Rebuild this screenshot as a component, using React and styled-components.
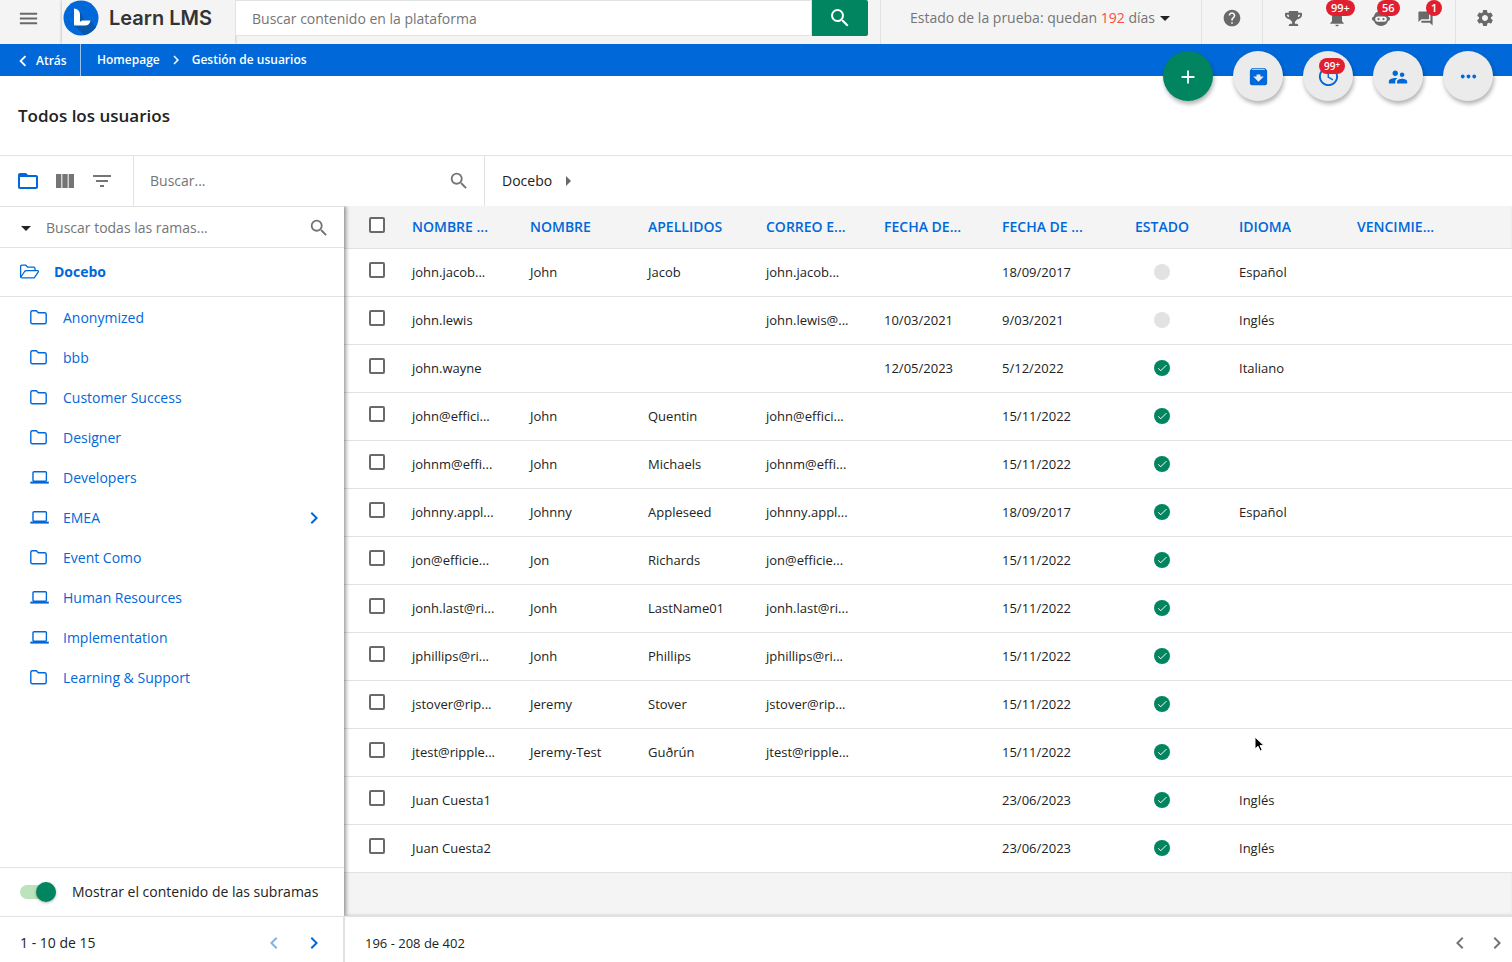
import React, { useState } from 'react';
import styled, { createGlobalStyle, css } from 'styled-components';
import {
  MdMenu, MdSearch, MdHelp, MdNotifications, MdForum, MdSettings, MdArchive, MdAccessTime,
  MdSupervisorAccount, MdMoreHoriz, MdViewColumn, MdFilterList, MdFolderOpen, MdAdd,
  MdChevronLeft, MdChevronRight, MdArrowDropDown, MdArrowRight,
} from 'react-icons/md';
import { FaTrophy } from 'react-icons/fa';

const blue = '#0068d9';
const green = '#008560';
const grey = '#696969';
const line = '#e1e2e2';
const pale = '#f4f4f4';

const GlobalStyle = createGlobalStyle`
  * {
    box-sizing: border-box;
  }

  body {
    margin: 0;
    background: #fff;
    color: #222;
    font-family: 'Open Sans', 'Noto Sans', sans-serif;
    font-size: 14px;
    line-height: 20px;
  }

  button,
  input {
    font: inherit;
    color: inherit;
    padding: 0;
    border: 0;
    background: none;
    outline: 0;
  }

  a {
    color: inherit;
    text-decoration: none;
  }

  input::placeholder {
    color: #757575;
    opacity: 1;
  }

  svg {
    display: block;
    flex: none;
  }
`;

const Page = styled.div`
  display: flex;
  flex-direction: column;
  min-height: 100vh;
`;

/* top header */

const Header = styled.header`
  display: flex;
  height: 44px;
  background: ${pale};
`;

const HeaderButton = styled.button`
  position: relative;
  display: flex;
  align-items: center;
  justify-content: center;
  width: ${props => props.$width || 44}px;
  height: 36px;
  color: ${grey};
`;

const Brand = styled.a`
  display: flex;
  align-items: center;
  gap: 10px;
  width: 173px;
  margin-left: 6px;
  padding: 0 0 8px 1px;
  background: ${pale};
  box-shadow: 0 0 3px rgba(0, 0, 0, 0.3);
  font-family: Inter, sans-serif;
  font-size: 20px;
  font-weight: 600;
  color: #333;
  white-space: nowrap;
`;

const GlobalSearch = styled.form`
  position: relative;
  display: flex;
  flex: 1;
  height: 36px;
  margin-right: 12px;

  input {
    flex: 1;
    min-width: 0;
    padding: 2px 16px 0;
    background: #fff;
    border: 1px solid ${line};
  }

  button {
    display: flex;
    align-items: center;
    justify-content: center;
    width: 56px;
    background: ${green};
    color: #fff;
    border-radius: 0 2px 2px 0;
  }
`;

const HeaderGroup = styled.div`
  display: flex;
  padding: ${props => props.$pad || '0'};
  border-left: 1px solid ${line};
`;

const Trial = styled.button`
  display: flex;
  align-items: center;
  height: 36px;
  color: #757575;

  b {
    font-weight: 400;
    color: #ff4b42;
  }

  svg {
    color: #222;
    margin-left: -2px;
  }
`;

const Badge = styled.span`
  position: absolute;
  top: ${props => (props.$fab ? 7 : 0)}px;
  left: ${props => (props.$fab ? 16 : props.$left)}px;
  height: 16px;
  padding: 0 5px;
  border-radius: 8px;
  background: #e01f2f;
  color: #fff;
  font-size: ${props => (props.$fab ? 10 : 11)}px;
  font-weight: 600;
  line-height: 16px;

  sup {
    font-size: 8px;
    line-height: 8px;
    vertical-align: 2px;
  }
`;

/* blue bar with the breadcrumbs, and the page title */

const Bar = styled.nav`
  position: relative;
  display: flex;
  align-items: center;
  height: 32px;
  background: ${blue};
  color: #fff;
  font-size: 12px;
  font-weight: 600;
`;

const Back = styled.a`
  display: flex;
  align-items: center;
  gap: 2px;
  width: 81px;
  height: 32px;
  padding: 1px 0 0 12px;
  border-right: 1px solid #99c3f0;
`;

const Crumbs = styled.div`
  display: flex;
  align-items: center;
  gap: 7px;
  padding-left: 16px;
`;

const Fabs = styled.div`
  position: absolute;
  top: 7px;
  right: 19px;
  z-index: 3;
  display: flex;
  gap: 20px;
`;

const Fab = styled.button`
  position: relative;
  display: flex;
  align-items: center;
  justify-content: center;
  width: 50px;
  height: 50px;
  padding-top: 1px;
  border-radius: 50%;
  background: ${props => (props.$main ? green : '#ebebeb')};
  color: ${props => (props.$main ? '#fff' : blue)};
  box-shadow: 1px 3px 4px rgba(0, 0, 0, 0.3);
`;

const Title = styled.h1`
  display: flex;
  align-items: center;
  height: 80px;
  margin: 0;
  padding: 1px 18px 0;
  border-bottom: 1px solid ${line};
  font-size: 17px;
  font-weight: 600;
`;

/* toolbar above the table */

const Toolbar = styled.div`
  display: flex;
  height: 50px;
`;

const Views = styled.div`
  display: flex;
  align-items: center;
  gap: 13px;
  width: 134px;
  padding-left: 16px;
  border-right: 1px solid ${line};
`;

const IconButton = styled.button`
  display: flex;
  color: ${props => (props.$active ? blue : '#757575')};
  opacity: ${props => (props.disabled ? 0.5 : 1)};
`;

const SearchBox = styled.label`
  display: flex;
  align-items: center;
  width: 351px;
  padding: 0 14px 0 16px;
  border-right: 1px solid ${line};
  color: #757575;

  input {
    flex: 1;
    min-width: 0;
  }
`;

const BranchPath = styled.div`
  display: flex;
  align-items: center;
  gap: 4px;
  padding-left: 17px;

  svg {
    color: ${grey};
  }
`;

const Main = styled.main`
  display: flex;
  flex: 1;
`;

/* branch tree */

const Sidebar = styled.aside`
  position: relative;
  z-index: 1;
  display: flex;
  flex-direction: column;
  flex: none;
  width: 344px;
  background: #fff;
  border-top: 1px solid ${line};
  box-shadow: 2px 0 4px rgba(0, 0, 0, 0.4);
  clip-path: inset(0 -10px 0 0);
`;

const BranchSearch = styled.label`
  display: flex;
  align-items: center;
  height: 41px;
  padding: 1px 14px 0;
  border-bottom: 1px solid ${line};
  color: #757575;

  input {
    flex: 1;
    min-width: 0;
    padding-left: 8px;
  }

  svg:first-child {
    color: #222;
  }
`;

const Root = styled.a`
  display: flex;
  align-items: center;
  gap: 14px;
  height: 49px;
  padding-left: 19px;
  border-bottom: 1px solid ${line};
  color: ${blue};
  font-weight: 700;
`;

const Branches = styled.ul`
  flex: 1;
  margin: 0;
  padding: 1px 0;
  list-style: none;
`;

const Branch = styled.a`
  display: flex;
  align-items: center;
  gap: 13px;
  height: 40px;
  padding: 0 18px 0 30px;
  color: ${blue};

  span {
    flex: 1;
  }
`;

const Subbranches = styled.label`
  display: flex;
  align-items: center;
  gap: 16px;
  height: 49px;
  padding-left: 20px;
  border-top: 1px solid ${line};
`;

const Toggle = styled.input`
  appearance: none;
  position: relative;
  width: 36px;
  height: 14px;
  margin: 0;
  border-radius: 7px;
  background: #bce3bb;

  &::before {
    content: '';
    position: absolute;
    top: -3px;
    left: ${props => (props.checked ? 16 : 0)}px;
    width: 20px;
    height: 20px;
    border-radius: 50%;
    background: ${props => (props.checked ? green : '#ebebeb')};
    box-shadow: 0 1px 3px rgba(0, 0, 0, 0.3);
  }
`;

/* users table */

const Users = styled.section`
  flex: 1;
  min-width: 0;
  background: ${pale};
  box-shadow: inset 0 -2px 2px #dfe0e0;
`;

const Table = styled.table`
  width: 100%;
  table-layout: fixed;
  border-collapse: collapse;
  font-size: 13px;
`;

const cell = css`
  height: 48px;
  padding: 0 12px;
  border-bottom: 1px solid ${line};
  text-align: left;
  white-space: nowrap;
  overflow: hidden;
`;

const Cell = styled.td`
  ${cell}
  background: #fff;
`;

const HeadCell = styled.th`
  ${cell}
  height: 42px;
  color: ${blue};
  font-size: 14px;
  font-weight: 600;

  &:nth-child(8) {
    padding-left: 0;
    text-align: center;
  }
`;

const StatusCell = styled(Cell)`
  padding-left: 0;

  svg {
    margin: 0 auto;
  }
`;

const Checkbox = styled.input`
  appearance: none;
  display: block;
  width: 16px;
  height: 16px;
  margin: 0 0 4px 13px;
  border: 2px solid ${grey};
  border-radius: 2px;
  background: #fff;
`;

/* pagers */

const Footer = styled.footer`
  display: flex;
  height: 46px;
  border-top: 1px solid ${line};
`;

const Pager = styled.div`
  display: flex;
  align-items: center;
  gap: ${props => (props.$wide ? 13 : 16)}px;
  flex: ${props => (props.$wide ? '1' : 'none')};
  width: ${props => (props.$wide ? 'auto' : '345px')};
  padding: 6px ${props => (props.$wide ? 3 : 17)}px 0 20px;
  border-right: ${props => (props.$wide ? 0 : 2)}px solid ${line};
  font-size: ${props => (props.$wide ? 13 : 14)}px;

  span {
    flex: 1;
  }
`;

const Pointer = styled.svg`
  position: absolute;
  top: 736px;
  left: 1253px;
  z-index: 4;
  pointer-events: none;
`;

const Logo = () => (
  <svg width="36" height="36" viewBox="0 0 36 36">
    <circle cx="18" cy="18" r="17.5" fill={blue} />
    <path d="M17 11l4 9 6.500.5 5.500 6.500a17.500 17.500 0 0 1-12 8L11 25z" fill="#0757ad" />
    <path d="M11 8.500c3.500.4 6 2.500 6 6V23l-6 2.500z" fill="#fff" />
    <path d="M11.500 25.500L19 20.500h8.500c-.4 3-2.500 5-5.500 5z" fill="#fff" />
  </svg>
);

const Robot = () => (
  <svg width="20" height="20" viewBox="0 0 20 20" fill="currentColor">
    <path fillRule="evenodd" d="M10 3c4 0 6.500 2.300 7 5.500 1.300.3 2 1.200 2 2.300s-.8 2-2 2.300C16.200 16 13.700 18 10 18s-6.200-2-7-4.900c-1.200-.3-2-1.200-2-2.300s.7-2 2-2.300C3.500 5.300 6 3 10 3zM6.800 8.500a2.600 2.600 0 0 0 0 5.200h6.400a2.600 2.600 0 0 0 0-5.200z" />
    <circle cx="7.500" cy="11.100" r="1.100" />
    <circle cx="12.500" cy="11.100" r="1.100" />
  </svg>
);

const Folder = () => (
  <svg width="20" height="18" viewBox="0 0 20 18" fill="none" stroke={blue} strokeWidth="1.400">
    <path d="M.8 3.300c0-1 .6-1.500 1.500-1.500h4l2 2h6.400c.9 0 1.500.6 1.500 1.500v7.900c0 .9-.6 1.500-1.500 1.500H2.300c-.9 0-1.500-.6-1.500-1.500z" />
  </svg>
);

const OpenFolder = () => (
  <svg width="21" height="18" viewBox="0 0 21 18" fill="none" stroke={blue} strokeWidth="1.300" strokeLinejoin="round">
    <path d="M16 7V5.500c0-.8-.5-1.300-1.300-1.300H8.800l-2-2H2.900c-.8 0-1.300.5-1.300 1.300v10c0 .8.5 1.300 1.300 1.300h12.300l4.100-6c.4-.7.100-1.200-.6-1.200H7.500c-.9 0-1.400.2-1.900.9L1.900 14" />
  </svg>
);

const Laptop = () => (
  <svg width="20" height="18" viewBox="0 0 20 18" fill="none" stroke={blue}>
    <rect x="3" y="2.700" width="13.400" height="9.600" rx="1" strokeWidth="1.400" />
    <path d="M.3 13.600h18.500" strokeWidth="2" />
  </svg>
);

const Status = ({ active }) => (
  <svg width="16" height="16" viewBox="0 0 16 16" role="img" aria-label={active ? 'Activo' : 'Inactivo'}>
    <circle cx="8" cy="8" r="8" fill={active ? green : '#e1e3e2'} />
    {active && <path d="M4.200 8.300l2.500 2.500 5.700-5.700" fill="none" stroke="#fff" strokeWidth="1" />}
  </svg>
);

const columns = ['NOMBRE ...', 'NOMBRE', 'APELLIDOS', 'CORREO E...', 'FECHA DE...', 'FECHA DE ...', 'ESTADO', 'IDIOMA', 'VENCIMIE...'];
const widths = [56, 118, 118, 118, 118, 118, 119, 118, 118];

// user, name, surname, mail, last access, created, active, language
const users = [
  ['john.jacob...', 'John', 'Jacob', 'john.jacob...', '', '18/09/2017', false, 'Español'],
  ['john.lewis', '', '', 'john.lewis@...', '10/03/2021', '9/03/2021', false, 'Inglés'],
  ['john.wayne', '', '', '', '12/05/2023', '5/12/2022', true, 'Italiano'],
  ['john@effici...', 'John', 'Quentin', 'john@effici...', '', '15/11/2022', true, ''],
  ['johnm@effi...', 'John', 'Michaels', 'johnm@effi...', '', '15/11/2022', true, ''],
  ['johnny.appl...', 'Johnny', 'Appleseed', 'johnny.appl...', '', '18/09/2017', true, 'Español'],
  ['jon@efficie...', 'Jon', 'Richards', 'jon@efficie...', '', '15/11/2022', true, ''],
  ['jonh.last@ri...', 'Jonh', 'LastName01', 'jonh.last@ri...', '', '15/11/2022', true, ''],
  ['jphillips@ri...', 'Jonh', 'Phillips', 'jphillips@ri...', '', '15/11/2022', true, ''],
  ['jstover@rip...', 'Jeremy', 'Stover', 'jstover@rip...', '', '15/11/2022', true, ''],
  ['jtest@ripple...', 'Jeremy-Test', 'Guðrún', 'jtest@ripple...', '', '15/11/2022', true, ''],
  ['Juan Cuesta1', '', '', '', '', '23/06/2023', true, 'Inglés'],
  ['Juan Cuesta2', '', '', '', '', '23/06/2023', true, 'Inglés'],
];

const branches = [
  { name: 'Anonymized' },
  { name: 'bbb' },
  { name: 'Customer Success' },
  { name: 'Designer' },
  { name: 'Developers', laptop: true },
  { name: 'EMEA', laptop: true, children: true },
  { name: 'Event Como' },
  { name: 'Human Resources', laptop: true },
  { name: 'Implementation', laptop: true },
  { name: 'Learning & Support' },
];

function TopHeader() {
  return (
    <Header>
      <HeaderButton $width={56} aria-label="Menú"><MdMenu size={23} /></HeaderButton>
      <Brand href="#home"><Logo />Learn LMS</Brand>
      <GlobalSearch onSubmit={evt => evt.preventDefault()}>
        <input aria-label="Buscar contenido" placeholder="Buscar contenido en la plataforma" />
        <button aria-label="Buscar"><MdSearch size={24} /></button>
      </GlobalSearch>
      <HeaderGroup $pad="0 24px 0 29px">
        <Trial><span>Estado de la prueba: quedan <b>192</b> días</span><MdArrowDropDown size={24} /></Trial>
      </HeaderGroup>
      <HeaderGroup>
        <HeaderButton $width={60} aria-label="Ayuda"><MdHelp size={20} /></HeaderButton>
      </HeaderGroup>
      <HeaderGroup $pad="0 8px">
        <HeaderButton aria-label="Logros"><FaTrophy size={17} /></HeaderButton>
        <HeaderButton aria-label="Notificaciones"><MdNotifications size={20} /><Badge $left={11}>99+</Badge></HeaderButton>
        <HeaderButton aria-label="Asistente"><Robot /><Badge $left={18}>56</Badge></HeaderButton>
        <HeaderButton aria-label="Mensajes"><MdForum size={17} /><Badge $left={23}>1</Badge></HeaderButton>
      </HeaderGroup>
      <HeaderGroup $pad="0 0 0 1px">
        <HeaderButton $width={55} aria-label="Configuración"><MdSettings size={20} /></HeaderButton>
      </HeaderGroup>
    </Header>
  );
}

function BranchTree() {
  const [showAll, setShowAll] = useState(true);

  return (
    <Sidebar>
      <BranchSearch>
        <MdArrowDropDown size={24} />
        <input aria-label="Buscar todas las ramas" placeholder="Buscar todas las ramas..." />
        <MdSearch size={22} />
      </BranchSearch>
      <Root href="#docebo"><OpenFolder />Docebo</Root>
      <Branches>
        {branches.map(branch => (
          <li key={branch.name}>
            <Branch href="#branch">
              {branch.laptop ? <Laptop /> : <Folder />}
              <span>{branch.name}</span>
              {branch.children && <MdChevronRight size={24} />}
            </Branch>
          </li>
        ))}
      </Branches>
      <Subbranches>
        <Toggle type="checkbox" role="switch" checked={showAll} onChange={() => setShowAll(!showAll)} />
        Mostrar el contenido de las subramas
      </Subbranches>
    </Sidebar>
  );
}

function UsersTable() {
  return (
    <Users>
      <Table>
        <colgroup>
          {widths.map((width, i) => <col key={i} width={width} />)}
          <col />
        </colgroup>
        <thead>
          <tr>
            <HeadCell><Checkbox type="checkbox" aria-label="Seleccionar todos" /></HeadCell>
            {columns.map((title, i) => <HeadCell key={i}>{title}</HeadCell>)}
          </tr>
        </thead>
        <tbody>
          {users.map(user => (
            <tr key={user[0]}>
              <Cell><Checkbox type="checkbox" aria-label={user[0]} /></Cell>
              {user.slice(0, 6).map((text, i) => <Cell key={i}>{text}</Cell>)}
              <StatusCell><Status active={user[6]} /></StatusCell>
              <Cell>{user[7]}</Cell>
              <Cell />
            </tr>
          ))}
        </tbody>
      </Table>
    </Users>
  );
}

export default function App() {
  return (
    <Page>
      <GlobalStyle />
      <TopHeader />
      <Bar>
        <Back href="#back"><MdChevronLeft size={22} />Atrás</Back>
        <Crumbs>
          <a href="#home">Homepage</a>
          <MdChevronRight size={18} />
          <a href="#users">Gestión de usuarios</a>
        </Crumbs>
        <Fabs>
          <Fab $main aria-label="Añadir"><MdAdd size={22} /></Fab>
          <Fab aria-label="Archivar"><MdArchive size={23} /></Fab>
          <Fab aria-label="Pendientes"><MdAccessTime size={23} /><Badge $fab>99<sup>+</sup></Badge></Fab>
          <Fab aria-label="Grupos"><MdSupervisorAccount size={22} /></Fab>
          <Fab aria-label="Más"><MdMoreHoriz size={23} /></Fab>
        </Fabs>
      </Bar>
      <Title>Todos los usuarios</Title>
      <Toolbar>
        <Views>
          <IconButton $active aria-label="Ramas"><MdFolderOpen size={24} /></IconButton>
          <IconButton aria-label="Columnas"><MdViewColumn size={24} /></IconButton>
          <IconButton aria-label="Filtros"><MdFilterList size={24} /></IconButton>
        </Views>
        <SearchBox>
          <input aria-label="Buscar usuarios" placeholder="Buscar..." />
          <MdSearch size={22} />
        </SearchBox>
        <BranchPath><a href="#docebo">Docebo</a><MdArrowRight size={24} /></BranchPath>
      </Toolbar>
      <Main>
        <BranchTree />
        <UsersTable />
      </Main>
      <Footer>
        <Pager>
          <span>1 - 10 de 15</span>
          <IconButton $active disabled aria-label="Anterior"><MdChevronLeft size={24} /></IconButton>
          <IconButton $active aria-label="Siguiente"><MdChevronRight size={24} /></IconButton>
        </Pager>
        <Pager $wide>
          <span>196 - 208 de 402</span>
          <IconButton aria-label="Anterior"><MdChevronLeft size={24} /></IconButton>
          <IconButton aria-label="Siguiente"><MdChevronRight size={24} /></IconButton>
        </Pager>
      </Footer>
      <Pointer width="14" height="18" viewBox="0 0 14 18">
        <path d="M2 1v12l3-2.700L7.200 15l2-1-2.100-4.400H11z" fill="#000" stroke="#fff" strokeWidth="1" />
      </Pointer>
    </Page>
  );
}
